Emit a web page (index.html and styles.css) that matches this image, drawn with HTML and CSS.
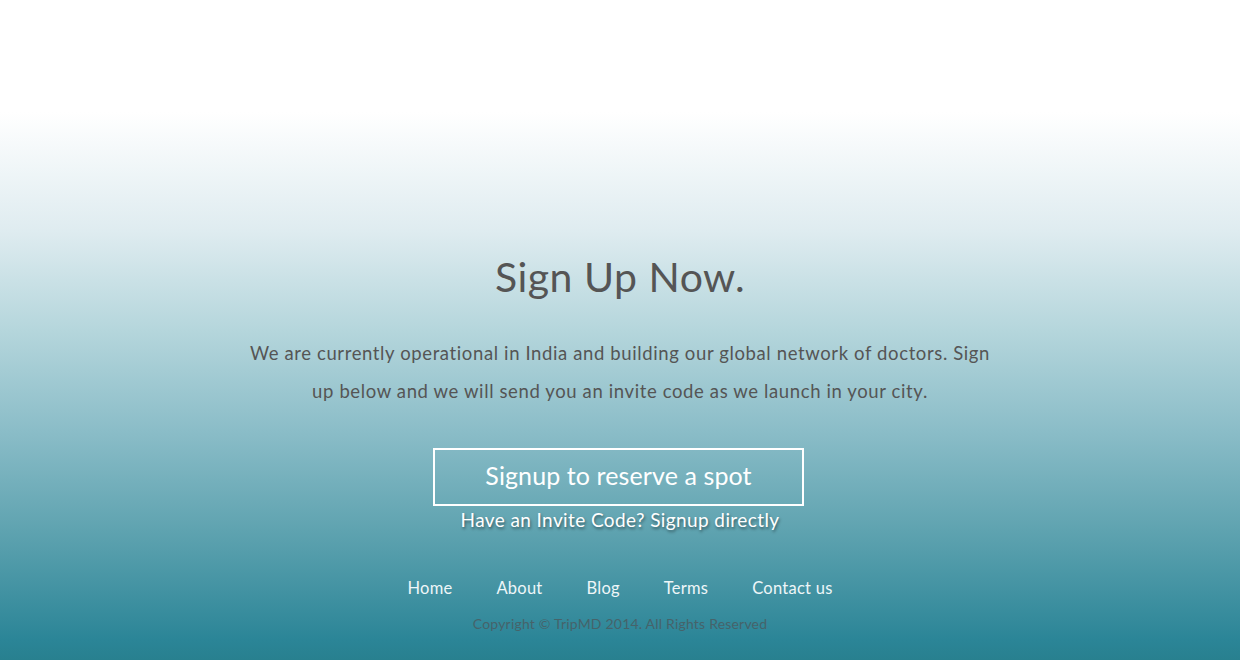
FILE: index.html
```html
<!DOCTYPE html>
<html>
<head>
<meta charset="utf-8">
<link rel="stylesheet" href="styles.css">
</head>
<body>
<div class="page">
  <div class="top"></div>
  <section class="signup">
    <h1 class="title">Sign Up Now.</h1>
    <p class="lead">We are currently operational in India and building our global network of doctors. Sign up below and we will send you an invite code as we launch in your city.</p>
    <a class="btn" href="#">Signup to reserve a spot</a>
    <a class="invite" href="#">Have an Invite Code? Signup directly</a>
  </section>
  <footer class="footer">
    <nav class="nav">
      <a href="#">Home</a>
      <a href="#">About</a>
      <a href="#">Blog</a>
      <a href="#">Terms</a>
      <a href="#">Contact us</a>
    </nav>
    <p class="copy">Copyright © TripMD 2014. All Rights Reserved</p>
  </footer>
</div>
</body>
</html>
```
FILE: styles.css
```css
html, body {
  margin: 0;
  padding: 0;
}
body {
  font-family: "Lato", "Open Sans", sans-serif;
  background: #fff;
}
.page {
  height: 660px;
  display: flex;
  flex-direction: column;
  align-items: center;
  background: linear-gradient(to bottom, #ffffff 0px, #ffffff 112px, #dfecf0 230px, #b5d6dc 330px, #8bbdc8 430px, #5fa3b0 530px, #2b8597 640px, #28808f 660px);
}
.top {
  height: 253px;
}
.signup {
  display: flex;
  flex-direction: column;
  align-items: center;
  width: 760px;
}
.title {
  margin: 0;
  font-weight: 400;
  font-size: 41px;
  line-height: 48px;
  color: #555555;
  letter-spacing: 0.5px;
}
.lead {
  margin: 33px 0 0;
  text-align: center;
  font-size: 18.5px;
  line-height: 38px;
  color: #555555;
  letter-spacing: 0.62px;
}
.btn {
  margin: 38px 3px 0 0;
  display: block;
  width: 367px;
  height: 50px;
  padding-bottom: 4px;
  border: 2px solid #ffffff;
  color: #ffffff;
  text-decoration: none;
  font-size: 25px;
  line-height: 50px;
  text-align: center;
  letter-spacing: 0.1px;
}
.invite {
  margin-top: 2px;
  color: #ffffff;
  text-decoration: none;
  font-size: 19px;
  line-height: 24px;
  letter-spacing: 0.4px;
  text-shadow: 1px 2px 3px rgba(0, 0, 0, 0.45);
}
.footer {
  margin-top: 44px;
  display: flex;
  flex-direction: column;
  align-items: center;
}
.nav {
  display: flex;
  gap: 44px;
}
.nav a {
  color: #eef6f8;
  text-decoration: none;
  font-size: 16.5px;
  line-height: 24px;
  letter-spacing: 0.25px;
}
.copy {
  margin: 14px 0 0;
  font-size: 14px;
  line-height: 20px;
  color: #46636a;
  letter-spacing: 0.2px;
}
```
